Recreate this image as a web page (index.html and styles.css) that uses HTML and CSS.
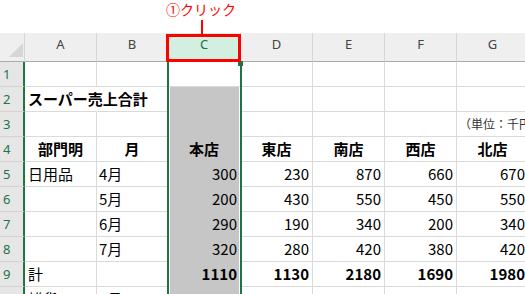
FILE: index.html
```html
<!DOCTYPE html>
<html lang="ja">
<head>
<meta charset="utf-8">
<link rel="stylesheet" href="styles.css">
</head>
<body>
<div class="top"></div>
<div class="sheet">
  <div class="h corner"><svg width="24" height="28" viewBox="0 0 24 28"><polygon points="9,24 23,10 23,24" fill="#d6d6d6"/></svg></div>
  <div class="h">A</div><div class="h">B</div><div class="h on">C</div><div class="h">D</div><div class="h">E</div><div class="h">F</div><div class="h">G</div>

  <div class="r">1</div><div class="c"></div><div class="c"></div><div class="c"></div><div class="c"></div><div class="c"></div><div class="c"></div><div class="c"></div>

  <div class="r">2</div><div class="c b ovf">スーパー売上合計</div><div class="c"></div><div class="c sel"></div><div class="c"></div><div class="c"></div><div class="c"></div><div class="c"></div>

  <div class="r">3</div><div class="c"></div><div class="c"></div><div class="c sel"></div><div class="c"></div><div class="c"></div><div class="c"></div><div class="c unit">（単位：千円）</div>

  <div class="r">4</div><div class="c ctr">部門明</div><div class="c ctr">月</div><div class="c ctr sel">本店</div><div class="c ctr">東店</div><div class="c ctr">南店</div><div class="c ctr">西店</div><div class="c ctr">北店</div>

  <div class="r">5</div><div class="c">日用品</div><div class="c m">4月</div><div class="c n sel">300</div><div class="c n">230</div><div class="c n">870</div><div class="c n">660</div><div class="c n">670</div>

  <div class="r">6</div><div class="c"></div><div class="c m">5月</div><div class="c n sel">200</div><div class="c n">430</div><div class="c n">550</div><div class="c n">450</div><div class="c n">550</div>

  <div class="r">7</div><div class="c"></div><div class="c m">6月</div><div class="c n sel">290</div><div class="c n">190</div><div class="c n">340</div><div class="c n">200</div><div class="c n">340</div>

  <div class="r">8</div><div class="c"></div><div class="c m">7月</div><div class="c n sel">320</div><div class="c n">280</div><div class="c n">420</div><div class="c n">380</div><div class="c n">420</div>

  <div class="r">9</div><div class="c">計</div><div class="c"></div><div class="c n b sel">1110</div><div class="c n b">1130</div><div class="c n b">2180</div><div class="c n b">1690</div><div class="c n b">1980</div>

  <div class="r">10</div><div class="c">雑貨</div><div class="c m">4月</div><div class="c n sel">270</div><div class="c n">720</div><div class="c n">450</div><div class="c n">270</div><div class="c n">550</div>
</div>

<div class="colsel"></div>
<div class="handle"></div>
<div class="redbox"></div>
<div class="redline"></div>
<div class="label">①クリック</div>
</body>
</html>
```

FILE: styles.css
```css
html, body {
  margin: 0;
  height: 294px;
  overflow: hidden;
  background: #fff;
}
body {
  position: relative;
  width: 525px;
  font-family: "Noto Sans CJK JP", "Noto Sans", sans-serif;
}
.top {
  height: 33px;
}
.sheet {
  display: grid;
  width: max-content;
  grid-template-columns: 25px 72px 71px 73px 72px 72px 72px 72px;
  grid-template-rows: 29px;
  grid-auto-rows: 25px;
}
.h {
  box-sizing: border-box;
  background: #efefef;
  border-right: 1px solid #d6d6d6;
  border-bottom: 1px solid #ababab;
  font-family: "Noto Sans", sans-serif;
  font-size: 13px;
  line-height: 22px;
  color: #444;
  text-align: center;
}
.h.on {
  background: #d3efe0;
  color: #217346;
}
.corner svg {
  display: block;
}
.r {
  box-sizing: border-box;
  background: #e6e6e6;
  color: #217346;
  font-family: "Noto Sans", sans-serif;
  font-size: 13px;
  line-height: 24px;
  padding-left: 3px;
  border-right: 2px solid #217346;
  border-bottom: 1px solid #d2d2d2;
  overflow: hidden;
  white-space: nowrap;
}
.c {
  box-sizing: border-box;
  border-right: 1px solid #dadada;
  border-bottom: 1px solid #dadada;
  font-size: 15px;
  line-height: 24px;
  padding: 0 3px;
  white-space: nowrap;
  overflow: hidden;
  color: #000;
}
.c.m {
  padding-left: 2px;
}
.n {
  text-align: right;
}
.b {
  font-weight: bold;
}
.ctr {
  text-align: center;
  font-weight: bold;
}
.ovf {
  overflow: visible;
  border-right-color: transparent;
  position: relative;
  z-index: 1;
}
.unit {
  font-size: 12px;
  color: #333;
  overflow: visible;
  padding-left: 2px;
}
.sel {
  border-bottom-color: transparent;
  background: linear-gradient(to right, #fff 2px, #c6c6c6 2px, #c6c6c6 71px, #fff 71px);
}
.colsel {
  position: absolute;
  left: 167px;
  top: 62px;
  width: 75px;
  bottom: 0;
  box-sizing: border-box;
  border-left: 2px solid #217346;
  border-right: 2px solid #217346;
}
.handle {
  position: absolute;
  left: 238px;
  top: 61px;
  width: 5px;
  height: 5px;
  background: #217346;
}
.redbox {
  position: absolute;
  left: 166px;
  top: 34px;
  width: 75px;
  height: 28px;
  box-sizing: border-box;
  border: 3px solid #f00;
}
.redline {
  position: absolute;
  left: 201px;
  top: 20px;
  width: 2px;
  height: 14px;
  background: #f00;
}
.label {
  position: absolute;
  left: 201px;
  top: 0;
  transform: translateX(-50%);
  color: #f00;
  font-size: 14px;
  line-height: 18px;
  white-space: nowrap;
}
```
